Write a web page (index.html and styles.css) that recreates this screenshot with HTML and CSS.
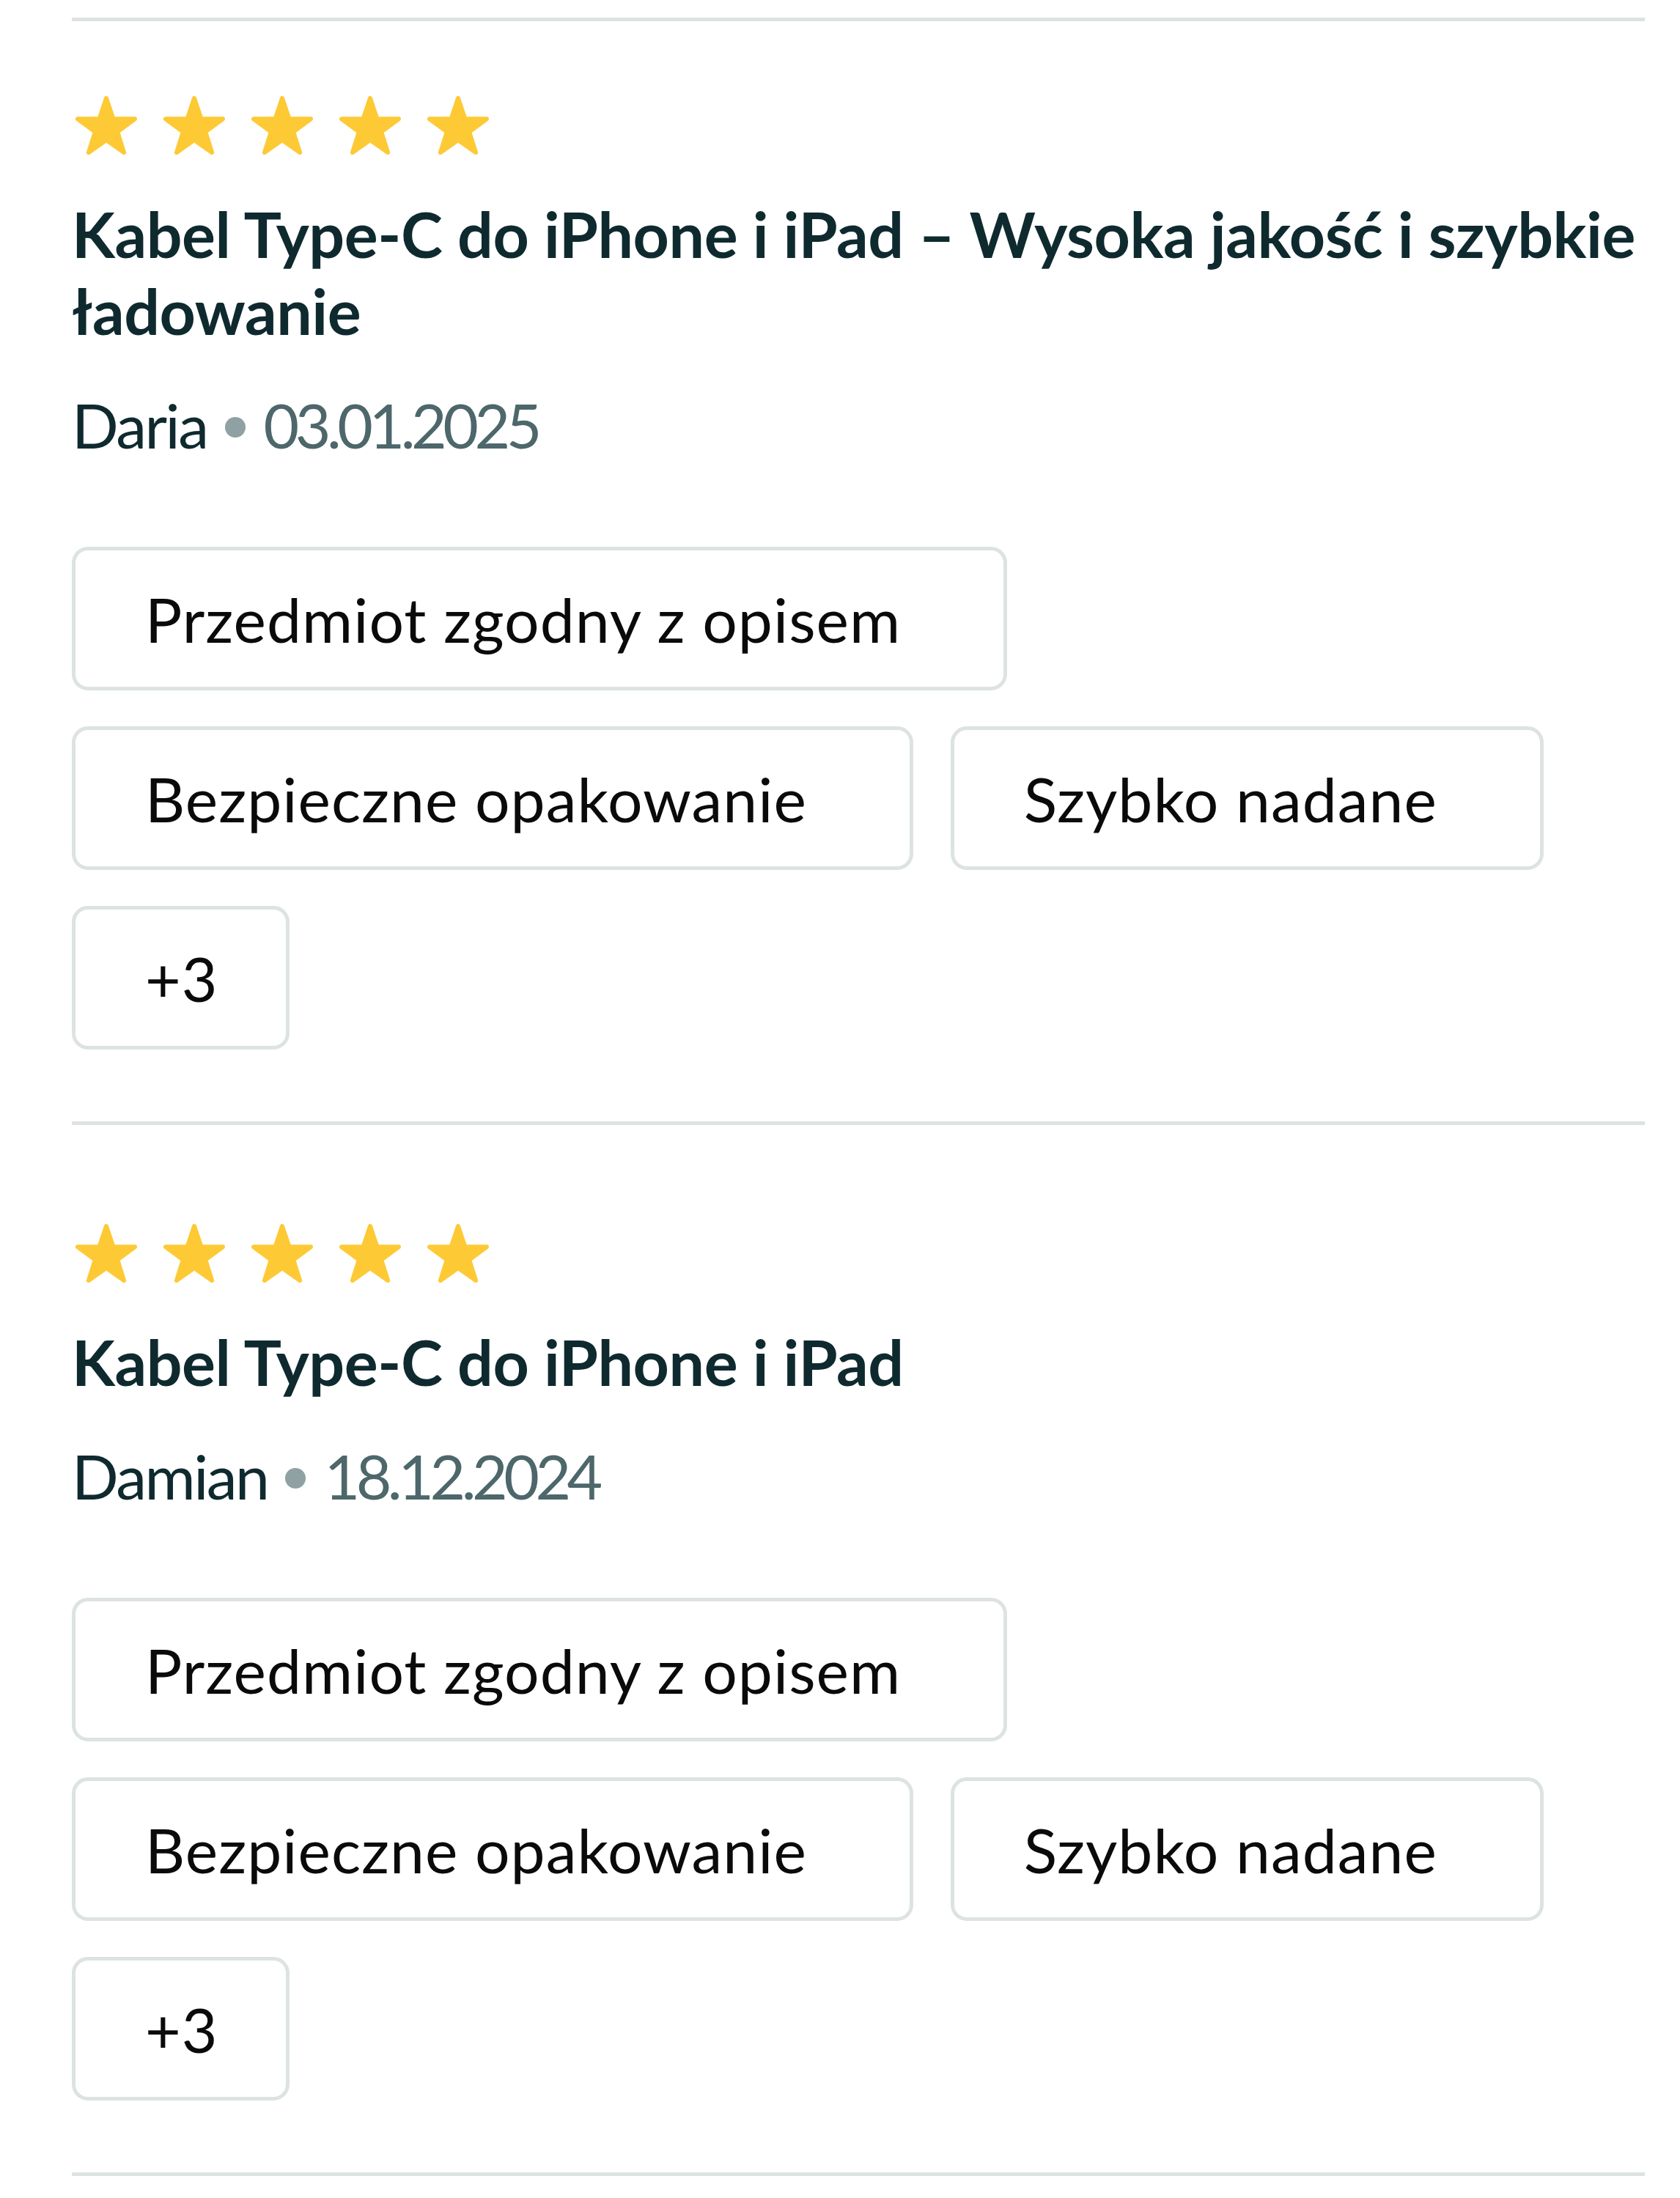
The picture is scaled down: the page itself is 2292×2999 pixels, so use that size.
FILE: index.html
```html
<!DOCTYPE html>
<html lang="pl">
<head>
<meta charset="utf-8">
<title>Opinie</title>
<link rel="stylesheet" href="styles.css">
</head>
<body>
<div class="reviews">
  <div class="divider"></div>
  <section class="review review--first">
    <div class="stars">
      <svg class="star" viewBox="0 0 84 81"><polygon points="42,3 51.4,31.06 80.99,31.33 57.22,48.94 66.1,77.17 42,60 17.9,77.17 26.78,48.94 3.01,31.33 32.6,31.06"/></svg>
      <svg class="star" viewBox="0 0 84 81"><polygon points="42,3 51.4,31.06 80.99,31.33 57.22,48.94 66.1,77.17 42,60 17.9,77.17 26.78,48.94 3.01,31.33 32.6,31.06"/></svg>
      <svg class="star" viewBox="0 0 84 81"><polygon points="42,3 51.4,31.06 80.99,31.33 57.22,48.94 66.1,77.17 42,60 17.9,77.17 26.78,48.94 3.01,31.33 32.6,31.06"/></svg>
      <svg class="star" viewBox="0 0 84 81"><polygon points="42,3 51.4,31.06 80.99,31.33 57.22,48.94 66.1,77.17 42,60 17.9,77.17 26.78,48.94 3.01,31.33 32.6,31.06"/></svg>
      <svg class="star" viewBox="0 0 84 81"><polygon points="42,3 51.4,31.06 80.99,31.33 57.22,48.94 66.1,77.17 42,60 17.9,77.17 26.78,48.94 3.01,31.33 32.6,31.06"/></svg>
    </div>
    <h3 class="title">Kabel Type-C do iPhone i iPad – Wysoka jakość i szybkie ładowanie</h3>
    <p class="meta"><span class="author">Daria</span><span class="dot"></span><span class="date">03.01.2025</span></p>
    <ul class="chips">
      <li class="chip chip--text">Przedmiot zgodny z opisem</li>
      <li class="chip chip--text">Bezpieczne opakowanie</li>
      <li class="chip chip--text">Szybko nadane</li>
      <li class="chip chip--more">+3</li>
    </ul>
  </section>
  <div class="divider"></div>
  <section class="review">
    <div class="stars">
      <svg class="star" viewBox="0 0 84 81"><polygon points="42,3 51.4,31.06 80.99,31.33 57.22,48.94 66.1,77.17 42,60 17.9,77.17 26.78,48.94 3.01,31.33 32.6,31.06"/></svg>
      <svg class="star" viewBox="0 0 84 81"><polygon points="42,3 51.4,31.06 80.99,31.33 57.22,48.94 66.1,77.17 42,60 17.9,77.17 26.78,48.94 3.01,31.33 32.6,31.06"/></svg>
      <svg class="star" viewBox="0 0 84 81"><polygon points="42,3 51.4,31.06 80.99,31.33 57.22,48.94 66.1,77.17 42,60 17.9,77.17 26.78,48.94 3.01,31.33 32.6,31.06"/></svg>
      <svg class="star" viewBox="0 0 84 81"><polygon points="42,3 51.4,31.06 80.99,31.33 57.22,48.94 66.1,77.17 42,60 17.9,77.17 26.78,48.94 3.01,31.33 32.6,31.06"/></svg>
      <svg class="star" viewBox="0 0 84 81"><polygon points="42,3 51.4,31.06 80.99,31.33 57.22,48.94 66.1,77.17 42,60 17.9,77.17 26.78,48.94 3.01,31.33 32.6,31.06"/></svg>
    </div>
    <h3 class="title">Kabel Type-C do iPhone i iPad</h3>
    <p class="meta"><span class="author">Damian</span><span class="dot"></span><span class="date">18.12.2024</span></p>
    <ul class="chips">
      <li class="chip chip--text">Przedmiot zgodny z opisem</li>
      <li class="chip chip--text">Bezpieczne opakowanie</li>
      <li class="chip chip--text">Szybko nadane</li>
      <li class="chip chip--more">+3</li>
    </ul>
  </section>
  <div class="divider"></div>
</div>
</body>
</html>
```

FILE: styles.css
```css
* {
  box-sizing: border-box;
}

html, body {
  margin: 0;
  padding: 0;
  background: #ffffff;
}

body {
  font-family: Lato, "Noto Sans", "DejaVu Sans", sans-serif;
  color: #0f2a2f;
}

.reviews {
  margin-left: 98px;
  width: 2146px;
  padding-top: 24px;
}

.divider {
  height: 5px;
  background: #dde3e2;
}

.review {
  padding-top: 135px;
  padding-bottom: 98px;
}

.review--first {
  padding-top: 102px;
}

.stars {
  display: flex;
  gap: 36px;
  padding-left: 5px;
  height: 80px;
}

.star {
  width: 84px;
  height: 81px;
  display: block;
}

.star polygon {
  fill: #fdca35;
  stroke: #fdca35;
  stroke-width: 6;
  stroke-linejoin: round;
}

.title {
  margin: 55px 0 0;
  font-size: 86px;
  line-height: 105px;
  font-weight: 700;
  letter-spacing: -0.4px;
  color: #0f2a2f;
}

.meta {
  margin: 54px 0 0;
  font-size: 84px;
  line-height: 100px;
  font-weight: 400;
  display: flex;
  align-items: center;
}

.author {
  color: #0f2a2f;
  letter-spacing: -2.5px;
}

.dot {
  width: 28px;
  height: 28px;
  border-radius: 50%;
  background: #8fa1a2;
  margin: 6px 25px 0 24px;
}

.date {
  color: #4d676b;
  letter-spacing: -5.5px;
}

.chips {
  list-style: none;
  margin: 116px 0 0;
  padding: 0;
  display: flex;
  flex-wrap: wrap;
  gap: 49px 51px;
}

.chip {
  height: 196px;
  border: 5px solid #dde3e2;
  border-radius: 22px;
  display: flex;
  align-items: center;
  font-size: 84px;
  font-weight: 400;
  letter-spacing: 1.05px;
  color: #0a0a0a;
  padding: 0 95px;
}

.chip--text {
  padding-right: 140px;
}

.chip--more {
  padding-right: 92px;
}
```
